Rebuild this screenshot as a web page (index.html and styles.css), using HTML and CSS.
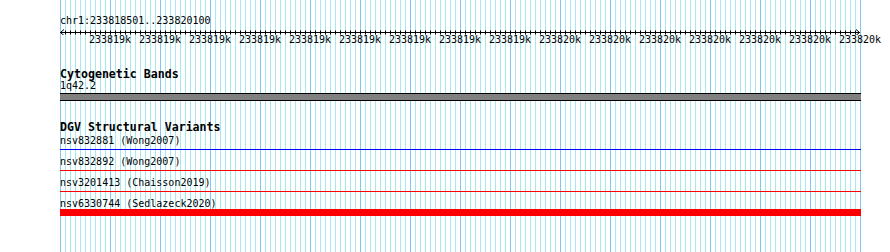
FILE: index.html
```html
<!DOCTYPE html>
<html lang="en">
<head>
   <meta charset="utf-8">
   <title>Genome view</title>
   <link rel="stylesheet" href="styles.css">
</head>
<body>
    <div class="view">
        <div class="gutter"></div>
        <div class="tracks">
            <div class="ruler">
                <div class="locus">chr1:233818501..233820100</div>
                <svg class="scale" width="801" height="7" viewBox="0 0 801 7">
                    <path id="ticks" stroke="#000" stroke-width="1" fill="none" d=""></path>
                    <line x1="0" y1="4.5" x2="800" y2="4.5" stroke="#000"/>
                    <polyline points="4,1.5 0.5,4.5 4,7.5" stroke="#000" fill="none"/>
                    <polyline points="796,1.5 799.5,4.5 796,7.5" stroke="#000" fill="none"/>
                </svg>
                <div class="labels">
                    <span>233819k</span><span>233819k</span><span>233819k</span>
                    <span>233819k</span><span>233819k</span><span>233819k</span>
                    <span>233819k</span><span>233819k</span><span>233819k</span>
                    <span>233820k</span><span>233820k</span><span>233820k</span>
                    <span>233820k</span><span>233820k</span><span>233820k</span>
                    <span>233820k</span>
                </div>
            </div>

            <div class="track cyto">
                <h2 class="track_title">Cytogenetic Bands</h2>
                <div class="feature_label">1q42.2</div>
                <div class="band"></div>
            </div>

            <div class="track dgv">
                <h2 class="track_title">DGV Structural Variants</h2>
                <div class="row">
                    <div class="feature_label">nsv832881 (Wong2007)</div>
                    <div class="glyph"><div class="line blue"></div></div>
                </div>
                <div class="row">
                    <div class="feature_label">nsv832892 (Wong2007)</div>
                    <div class="glyph"><div class="line red"></div></div>
                </div>
                <div class="row">
                    <div class="feature_label">nsv3201413 (Chaisson2019)</div>
                    <div class="glyph"><div class="line red"></div></div>
                </div>
                <div class="row">
                    <div class="feature_label">nsv6330744 (Sedlazeck2020)</div>
                    <div class="glyph"><div class="bar red"></div></div>
                </div>
            </div>
        </div>
    </div>
    <script src="ruler.js"></script>
</body>
</html>
```

FILE: ruler.js
```js
// tick marks every 5px along the scale bar
var d = "";
for (var x = 5; x < 800; x += 5) {
    d += "M" + (x + 0.5) + " 2.5V6.5";
}
document.getElementById("ticks").setAttribute("d", d);
```

FILE: styles.css
```css
body {
    margin: 0;
    background-color: #ffffff;
    font-family: "DejaVu Sans Mono", monospace;
    font-size: 10px;
    color: #000000;
}

.view {
    display: flex;
    height: 252px;
    overflow: hidden;
}

.gutter {
    width: 60px;
    flex-shrink: 0;
}

.tracks {
    width: 801px;
    flex-shrink: 0;
    height: 252px;
    background-image:
        repeating-linear-gradient(to right, #80c6ee 0 1px, transparent 1px 50px),
        repeating-linear-gradient(to right, #a6e8ee 0 1px, transparent 1px 5px);
}

.ruler {
    padding-top: 15px;
    height: 53px;
}

.locus {
    line-height: 12px;
}

.scale {
    display: block;
    margin-top: 1px;
}

.labels {
    display: flex;
    margin-top: -1px;
    margin-left: 25px;
    line-height: 12px;
}

.labels span {
    width: 50px;
    flex-shrink: 0;
    text-align: center;
}

.track_title {
    margin: 0;
    font-size: 11.6px;
    font-weight: bold;
    line-height: 12px;
}

.feature_label {
    line-height: 12px;
    white-space: nowrap;
}

.cyto .band {
    margin-top: 1px;
    height: 6px;
    background-color: #808080;
    border-top: 1px solid #000000;
    border-bottom: 1px solid #000000;
}

.dgv {
    margin-top: 20px;
}

.dgv .track_title {
    margin-bottom: 2px;
}

.row {
    height: 21px;
}

.glyph {
    height: 5px;
    display: flex;
    flex-direction: column;
    justify-content: center;
}

.line {
    height: 1px;
    flex-shrink: 0;
}

.bar {
    height: 7px;
    flex-shrink: 0;
}

.blue {
    background-color: #0000ff;
}

.red {
    background-color: #ff0000;
}
```
